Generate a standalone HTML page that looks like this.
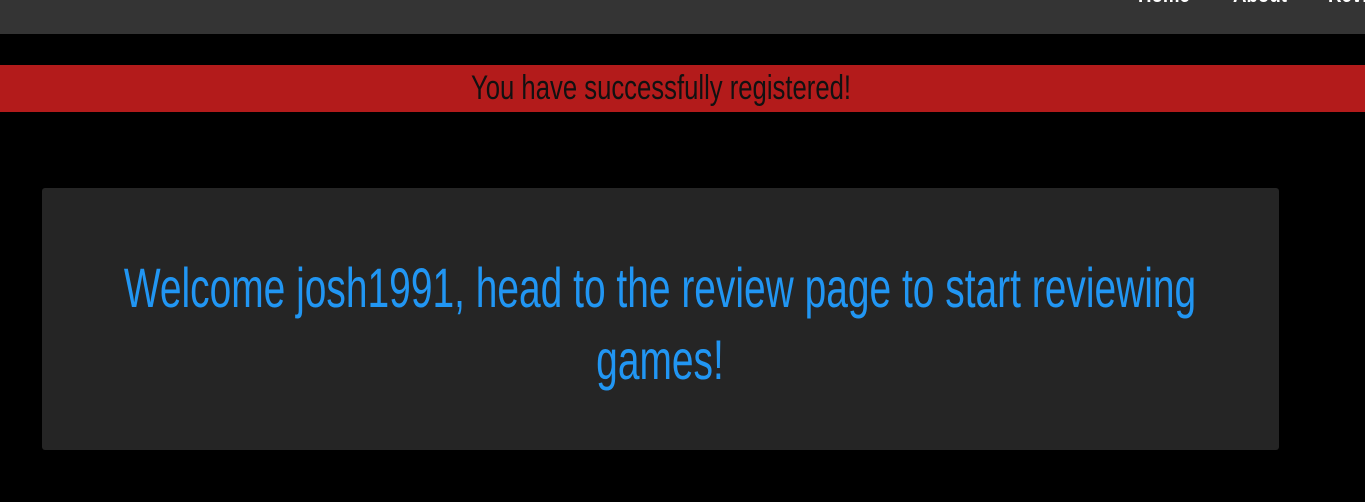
<!DOCTYPE html>
<html><head><style>
body{margin:0;background:#000;width:1365px;height:502px;overflow:hidden;font-family:"Liberation Sans",sans-serif;position:relative}
.nav{position:absolute;left:0;top:0;width:1365px;height:34px;background:#343434}
.nav span{position:absolute;top:-18px;color:#fff;font-size:22px;font-weight:bold;transform:scaleX(.85);transform-origin:left}
.alert{position:absolute;left:0;top:65px;width:1365px;height:47px;background:#b31b1b}
.c{position:absolute;left:50%;white-space:nowrap}
.alert .c{font-size:34px;line-height:47px;top:0;left:661px;color:#111;transform:translateX(-50%) scaleX(.755)}
.box{position:absolute;left:42px;top:188px;width:1237px;height:262px;background:#252525;border-radius:3px}
.t{color:#2196f3;font-size:56px;line-height:56px;transform:translateX(-50%) scaleX(.695)}
</style></head><body>
<div class="nav"><span style="left:1138px">Home</span><span style="left:1233px">About</span><span style="left:1328px">Reviews</span></div>
<div class="alert"><div class="c">You have successfully registered!</div></div>
<div class="box">
<div class="c t" style="top:72px;left:618px">Welcome josh1991, head to the review page to start reviewing</div>
<div class="c t" style="top:144px;left:618px">games!</div>
</div>
</body></html>
